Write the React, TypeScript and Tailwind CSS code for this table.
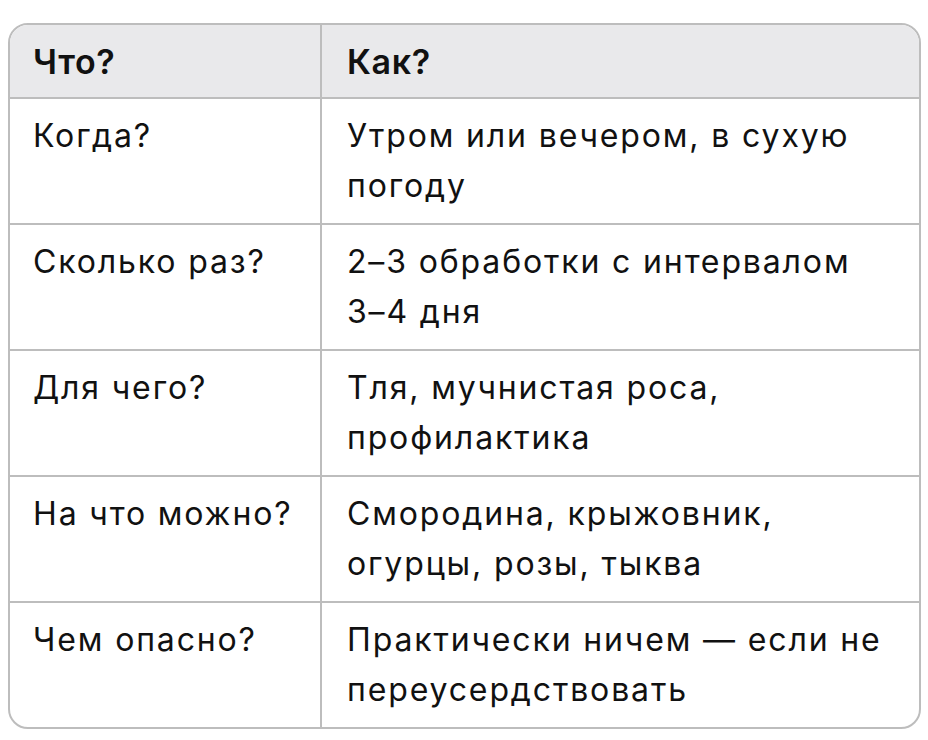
import React from "react";

const rows: [string, React.ReactNode][] = [
  ["Когда?", "Утром или вечером, в сухую погоду"],
  ["Сколько раз?", <>2–3 обработки с интервалом <span className="whitespace-nowrap">3–4 дня</span></>],
  ["Для чего?", "Тля, мучнистая роса, профилактика"],
  ["На что можно?", "Смородина, крыжовник, огурцы, розы, тыква"],
  ["Чем опасно?", "Практически ничем — если не переусердствовать"],
];

export default function App() {
  return (
    <div className="w-[928px] h-[740px] bg-white pt-[23px] pl-2" style={{ fontFamily: "Inter, 'Noto Sans', sans-serif" }}>
      <div className="w-[913px] rounded-[20px] border-2 border-[#bdbdbd] overflow-hidden text-[#111111]">
        <div className="grid grid-cols-[312px_1fr] bg-[#e9e9eb] border-b-2 border-[#bdbdbd]">
          <div className="h-[72px] flex items-center px-[23px] border-r-2 border-[#bdbdbd] text-[34px] font-semibold tracking-[0.02em]">Что?</div>
          <div className="h-[72px] flex items-center px-[25px] text-[34px] font-semibold tracking-[0.02em]">Как?</div>
        </div>
        {rows.map(([a, b], i) => (
          <div
            key={i}
            className={`grid grid-cols-[312px_1fr] ${i < rows.length - 1 ? "border-b-2 border-[#bdbdbd]" : ""}`}
          >
            <div className="h-[124px] pt-[12px] px-[23px] border-r-2 border-[#bdbdbd] text-[32px] leading-[50px] tracking-[0.058em]">{a}</div>
            <div className="h-[124px] pt-[12px] pl-[25px] pr-4 text-[32px] leading-[50px] tracking-[0.058em]">{b}</div>
          </div>
        ))}
      </div>
    </div>
  );
}
